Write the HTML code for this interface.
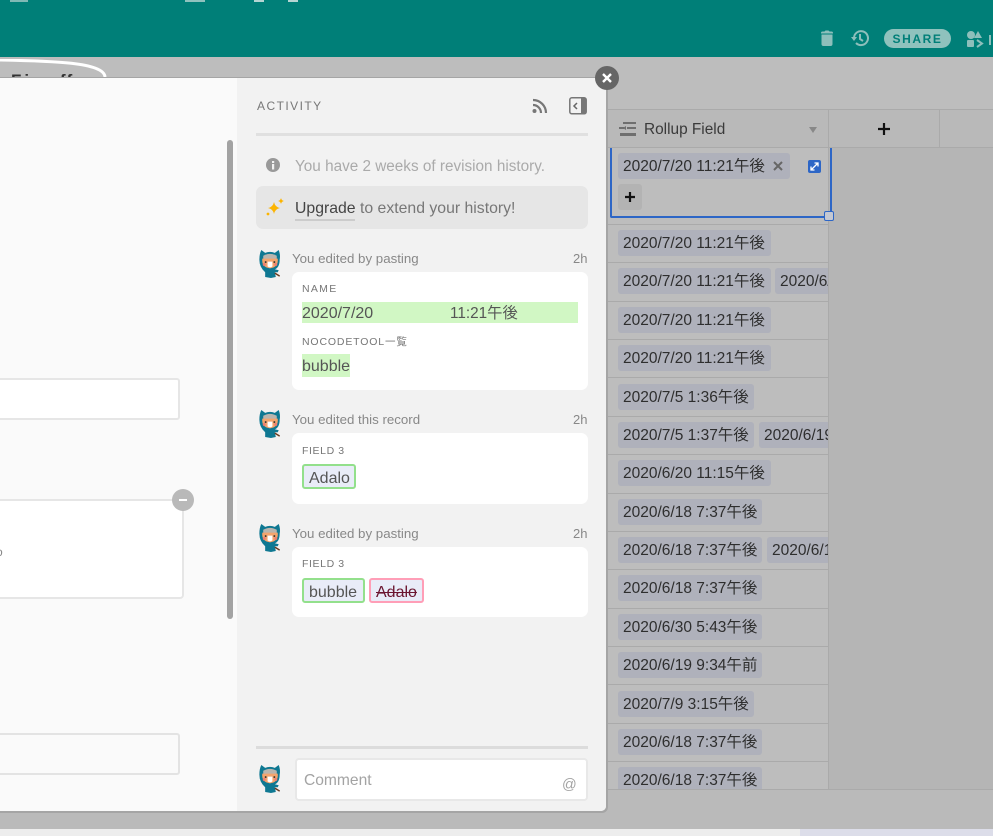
<!DOCTYPE html>
<html><head><meta charset="utf-8">
<style>
html,body{margin:0;padding:0;width:993px;height:836px;overflow:hidden;background:#bdbdbd}
body{position:relative;font-family:"Liberation Sans","Noto Sans CJK JP",sans-serif;color:#333}
.a{position:absolute;white-space:nowrap;box-sizing:border-box}
.chip{position:absolute;height:26px;line-height:28px;background:#afb1bb;border-radius:3px;padding:0 5px;font-size:15.500px;color:#2e2e2e;white-space:nowrap;overflow:hidden}
.sep{position:absolute;left:608px;width:220px;height:1px;background:#aaa}
.lab{position:absolute;font-size:10.500px;letter-spacing:1.100px;color:#777;white-space:nowrap}
.meta{position:absolute;font-size:13.300px;color:#888;white-space:nowrap}
.time{position:absolute;font-size:13px;color:#888;left:573px}
.card{position:absolute;left:292px;width:296px;background:#fff;border-radius:7px}
.tag{position:absolute;height:26px;line-height:25px;background:#e9ecf8;border:2px solid #93e08c;border-radius:3px;box-sizing:border-box;padding:0 5px;font-size:16px;color:#555;white-space:nowrap}
</style></head><body>
<div class="a" style="left:0;top:0;width:993px;height:57px;background:#007f78"></div>
<div class="a" style="left:10px;top:0;width:18px;height:2px;background:#7fb9b5"></div>
<div class="a" style="left:185px;top:0;width:20px;height:2px;background:#8fc2be"></div>
<div class="a" style="left:254px;top:0;width:10px;height:2px;background:#b5d5d3"></div>
<div class="a" style="left:288px;top:0;width:10px;height:2px;background:#b5d5d3"></div>

<svg class="a" style="left:818px;top:28px" width="175" height="22" viewBox="0 0 175 22">
<path d="M3 5q0-1.500 1.500-1.500H6.500L7.500 2.500h3l1 1H13.500Q15 3.500 15 5v.5H3zM3.500 6.500h11V16q0 2-2 2h-7q-2 0-2-2z" fill="#8dbfbb"/>
<g fill="none" stroke="#8dbfbb" stroke-width="2"><path d="M36 10a7 7 0 1 1 2 5"/><path d="M42 6v5l3 2"/></g>
<path d="M33 9h6l-3 4z" fill="#8dbfbb"/>
<circle cx="153" cy="7" r="4" fill="#8dbfbb"/><path d="M160 3l4 7h-8z" fill="#8dbfbb"/><rect x="149" y="12" width="7" height="7" rx="1" fill="#8dbfbb"/>
<path d="M159 12l5 3.500-5 3.500" fill="none" stroke="#8dbfbb" stroke-width="2"/>
<rect x="171" y="7" width="2" height="10" fill="#8dbfbb"/>
</svg>
<div class="a" style="left:884px;top:29px;width:67px;height:19px;border-radius:10px;background:#8fc2bd;color:#007f78;font-size:12px;font-weight:bold;letter-spacing:1.600px;line-height:20px;text-align:center">SHARE</div>

<div class="a" style="left:0;top:57px;width:993px;height:779px;background:#bdbdbd"></div>
<div class="a" style="left:828px;top:148px;width:165px;height:642px;background:#b5b5b5"></div>
<div class="a" style="left:608px;top:109px;width:385px;height:1px;background:#aaa"></div>
<div class="a" style="left:608px;top:110px;width:385px;height:38px;background:#b9b9b9"></div>
<div class="a" style="left:608px;top:147px;width:385px;height:1px;background:#aaa"></div>
<div class="a" style="left:828px;top:110px;width:1px;height:680px;background:#aaa"></div>
<div class="a" style="left:939px;top:110px;width:1px;height:38px;background:#aaa"></div>
<div class="a" style="left:0;top:789px;width:993px;height:1px;background:#aaa"></div>
<div class="a" style="left:0;top:790px;width:993px;height:39px;background:#bababa"></div>
<div class="a" style="left:0;top:829px;width:800px;height:7px;background:#ededed"></div>
<div class="a" style="left:800px;top:829px;width:193px;height:7px;background:#dcdde9"></div>

<svg class="a" style="left:619px;top:121px" width="18" height="16" viewBox="0 0 18 16"><g fill="#6f6f6f"><rect x="4" y="1" width="13" height="2"/><rect x="0" y="6" width="5" height="2"/><rect x="8" y="6" width="9" height="2"/><rect x="1" y="12" width="16" height="3"/></g><path d="M4 7l3-2v4z" fill="#6f6f6f"/></svg>
<div class="a" style="left:644px;top:121px;font-size:15.400px;color:#3a3a3a">Rollup Field</div>
<div class="a" style="left:809px;top:127px;width:0;height:0;border-left:4px solid transparent;border-right:4px solid transparent;border-top:6px solid #888"></div>
<svg class="a" style="left:877px;top:122px" width="14" height="14"><path d="M7 1v12M1 7h12" stroke="#111" stroke-width="2.200"/></svg>

<!-- rows -->
<div class="sep" style="top:224px"></div><div class="sep" style="top:262px"></div><div class="sep" style="top:301px"></div><div class="sep" style="top:339px"></div><div class="sep" style="top:377px"></div><div class="sep" style="top:416px"></div><div class="sep" style="top:454px"></div><div class="sep" style="top:493px"></div><div class="sep" style="top:531px"></div><div class="sep" style="top:569px"></div><div class="sep" style="top:608px"></div><div class="sep" style="top:646px"></div><div class="sep" style="top:684px"></div><div class="sep" style="top:723px"></div><div class="sep" style="top:761px"></div>

<div class="chip" style="left:618px;top:230px;width:153px;box-sizing:border-box">2020/7/20 11:21午後</div>
<div class="chip" style="left:618px;top:268px;width:153px;box-sizing:border-box">2020/7/20 11:21午後</div>
<div class="chip" style="left:775px;top:268px;width:53px;box-sizing:border-box;border-radius:3px 0 0 3px">2020/6/20</div>
<div class="chip" style="left:618px;top:307px;width:153px;box-sizing:border-box">2020/7/20 11:21午後</div>
<div class="chip" style="left:618px;top:345px;width:153px;box-sizing:border-box">2020/7/20 11:21午後</div>
<div class="chip" style="left:618px;top:384px;width:136px;box-sizing:border-box">2020/7/5 1:36午後</div>
<div class="chip" style="left:618px;top:422px;width:136px;box-sizing:border-box">2020/7/5 1:37午後</div>
<div class="chip" style="left:759px;top:422px;width:69px;box-sizing:border-box;border-radius:3px 0 0 3px">2020/6/19</div>
<div class="chip" style="left:618px;top:460px;width:153px;box-sizing:border-box">2020/6/20 11:15午後</div>
<div class="chip" style="left:618px;top:499px;width:144px;box-sizing:border-box">2020/6/18 7:37午後</div>
<div class="chip" style="left:618px;top:537px;width:144px;box-sizing:border-box">2020/6/18 7:37午後</div>
<div class="chip" style="left:767px;top:537px;width:61px;box-sizing:border-box;border-radius:3px 0 0 3px">2020/6/18</div>
<div class="chip" style="left:618px;top:575px;width:144px;box-sizing:border-box">2020/6/18 7:37午後</div>
<div class="chip" style="left:618px;top:614px;width:144px;box-sizing:border-box">2020/6/30 5:43午後</div>
<div class="chip" style="left:618px;top:652px;width:144px;box-sizing:border-box">2020/6/19 9:34午前</div>
<div class="chip" style="left:618px;top:691px;width:136px;box-sizing:border-box">2020/7/9 3:15午後</div>
<div class="chip" style="left:618px;top:729px;width:144px;box-sizing:border-box">2020/6/18 7:37午後</div>
<div class="chip" style="left:618px;top:767px;width:144px;box-sizing:border-box;height:22px;border-radius:3px 3px 0 0">2020/6/18 7:37午後</div>

<!-- selected cell -->
<div class="a" style="left:610px;top:148px;width:222px;height:70px;border:2px solid #2d66c6;border-top:none;border-radius:0 0 2px 2px"></div>
<div class="chip" style="left:618px;top:153px;width:172px;box-sizing:border-box">2020/7/20 11:21午後</div>
<svg class="a" style="left:772px;top:160px" width="12" height="12"><path d="M2 2l8 8M10 2l-8 8" stroke="#666" stroke-width="2"/></svg>
<div class="a" style="left:618px;top:184px;width:24px;height:26px;background:#b3b3b3;border-radius:3px"></div>
<svg class="a" style="left:624px;top:191px" width="12" height="12"><path d="M6 1v10M1 6h10" stroke="#111" stroke-width="2.200"/></svg>
<svg class="a" style="left:808px;top:160px" width="13" height="13"><rect width="13" height="13" rx="2" fill="#2d66c6"/><path d="M3.500 9.500l6-6M6.500 3h3.500v3.500M3 6.500v3.500h3.500" stroke="#fff" stroke-width="1.300" fill="none"/></svg>
<div class="a" style="left:824px;top:211px;width:10px;height:10px;background:#c4c8d2;border:1px solid #2d66c6;border-radius:2px"></div>

<!-- modal backdrop tab -->
<svg class="a" style="left:0;top:59px" width="110" height="20"><path d="M0 1 C50 2 104 3 105 18" fill="none" stroke="#fff" stroke-width="3"/></svg>
<div class="a" style="left:11px;top:71px;font-size:17px;font-weight:bold;letter-spacing:3px;color:#333;height:7px;overflow:hidden;line-height:20px">Fi</div>
<div class="a" style="left:60px;top:71px;font-size:17px;font-weight:bold;letter-spacing:1px;color:#333;height:7px;overflow:hidden;line-height:20px">ff</div>

<!-- modal -->
<div class="a" style="left:0;top:77px;width:608px;height:736px;background:#a5a5a5;border-radius:0 6px 6px 0"></div>
<div class="a" style="left:0;top:78px;width:606px;height:733px;background:#fafafa;border-radius:0 5px 5px 0;overflow:hidden">
 <div class="a" style="left:237px;top:0;width:369px;height:733px;background:#f2f2f2"></div>
</div>
<div class="a" style="left:227px;top:140px;width:6px;height:479px;background:#a3a3a3;border-radius:3px"></div>

<div class="a" style="left:-5px;top:378px;width:185px;height:42px;background:#fff;border:2px solid #e6e6e6;border-radius:3px"></div>
<div class="a" style="left:-5px;top:499px;width:189px;height:100px;background:#fff;border:2px solid #e6e6e6;border-radius:4px"></div>
<div class="a" style="left:-4px;top:545px;font-size:12px;color:#888">o</div>
<div class="a" style="left:172px;top:489px;width:22px;height:22px;border-radius:50%;background:#b9b9b9"></div>
<div class="a" style="left:179px;top:499px;width:8px;height:2px;background:#fff"></div>
<div class="a" style="left:-5px;top:733px;width:185px;height:42px;background:#fafafa;border:2px solid #e3e3e3;border-radius:3px"></div>

<!-- close -->
<div class="a" style="left:595px;top:66px;width:24px;height:24px;border-radius:50%;background:#666"></div>
<svg class="a" style="left:601px;top:72px" width="12" height="12"><path d="M2 2l8 8M10 2l-8 8" stroke="#fff" stroke-width="2.400"/></svg>

<!-- activity -->
<div class="a" style="left:257px;top:99px;font-size:12px;letter-spacing:1.450px;color:#777">ACTIVITY</div>
<svg class="a" style="left:532px;top:98px" width="16" height="16" viewBox="0 0 16 16"><circle cx="2.500" cy="13" r="2" fill="#777"/><path d="M1 7a8 8 0 0 1 8 8M1 2a13 13 0 0 1 13 13" fill="none" stroke="#777" stroke-width="2.200"/></svg>
<svg class="a" style="left:569px;top:97px" width="18" height="18" viewBox="0 0 18 18"><rect x=".8" y=".8" width="16.400" height="16" rx="2" fill="#f2f2f2" stroke="#777" stroke-width="1.500"/><path d="M12 1h3q2 0 2 2v12q0 2-2 2h-3z" fill="#777"/><path d="M8 6l-3 3 3 3" fill="none" stroke="#666" stroke-width="1.500"/></svg>
<div class="a" style="left:256px;top:133px;width:332px;height:3px;background:#e0e0e0"></div>

<svg class="a" style="left:266px;top:158px" width="14" height="14" viewBox="0 0 14 14"><circle cx="7" cy="7" r="7" fill="#999"/><rect x="6" y="6" width="2.200" height="5.500" fill="#f2f2f2"/><rect x="6" y="3" width="2.200" height="2" fill="#f2f2f2"/></svg>
<div class="a" style="left:295px;top:158px;font-size:15.300px;color:#aaa">You have 2 weeks of revision history.</div>
<div class="a" style="left:256px;top:186px;width:332px;height:43px;background:#e6e6e6;border-radius:7px"></div>
<svg class="a" style="left:266px;top:198px" width="19" height="19" viewBox="0 0 19 19"><path d="M8 3q1 5 6 6q-5 1-6 6q-1-5-6-6q5-1 6-6z" fill="#fcb400" transform="translate(0 1)"/><path d="M15 0q.5 2.500 3 3q-2.500.5-3 3q-.5-2.500-3-3q2.500-.5 3-3z" fill="#fcb400"/><circle cx="2" cy="16" r="1.400" fill="#fcb400"/></svg>
<div class="a" style="left:295px;top:200px;font-size:15.800px;color:#777"><span style="color:#444">Upgrade</span> to extend your history!</div>
<div class="a" style="left:295px;top:219px;width:60px;height:2px;background:#ccc"></div>

<!-- avatars -->
<svg width="0" height="0" style="position:absolute"><defs><symbol id="av" viewBox="0 0 24 30">
<path d="M3 1l4 3q5-2 10 0l4-3q2 5 1 10q0 8-5 10l4 1-1 2-3 0 1 5-5 1-6-1 0-5Q1 19 1 11 1 5 3 1z" fill="#0f7892"/>
<path d="M5 7q7-4 14 0v4H5z" fill="#b9b5ae"/>
<path d="M4 10h16q1 9-8 10Q3 19 4 10z" fill="#f4a46c"/>
<path d="M9.500 13h5v5q-2.500 2-5 0z" fill="#fff"/><circle cx="7.500" cy="13.500" r="1" fill="#333"/><circle cx="16.500" cy="13.500" r="1" fill="#333"/><circle cx="6" cy="16" r="1.500" fill="#ee7d73"/><circle cx="18" cy="16" r="1.500" fill="#ee7d73"/>
<path d="M17 25l5 3" stroke="#6a3a20" stroke-width="1.500"/>
</symbol></defs></svg>
<svg class="a" style="left:258px;top:249px" width="24" height="29"><use href="#av"/></svg>
<svg class="a" style="left:258px;top:409px" width="24" height="29"><use href="#av"/></svg>
<svg class="a" style="left:258px;top:523px" width="24" height="29"><use href="#av"/></svg>
<svg class="a" style="left:258px;top:764px" width="24" height="29"><use href="#av"/></svg>

<div class="meta" style="left:292px;top:251px">You edited by pasting</div><div class="time" style="top:251px">2h</div>
<div class="card" style="top:272px;height:118px"></div>
<div class="lab" style="left:302px;top:283px;letter-spacing:1.300px">NAME</div>
<div class="a" style="left:302px;top:302px;width:276px;height:21px;background:#d1f7c4;font-size:16px;line-height:23px;color:#555">2020/7/20<span style="position:absolute;left:148px;font-size:15.300px">11:21午後</span></div>
<div class="lab" style="left:302px;top:334px;letter-spacing:.85px">NOCODETOOL一覧</div>
<div class="a" style="left:302px;top:354px;width:48px;height:23px;background:#d1f7c4;font-size:16px;line-height:25px;color:#555">bubble</div>

<div class="meta" style="left:292px;top:412px">You edited this record</div><div class="time" style="top:412px">2h</div>
<div class="card" style="top:433px;height:71px"></div>
<div class="lab" style="left:302px;top:445px;letter-spacing:.6px">FIELD 3</div>
<div class="tag" style="left:302px;top:464px;width:54px;height:25px">Adalo</div>

<div class="meta" style="left:292px;top:526px">You edited by pasting</div><div class="time" style="top:526px">2h</div>
<div class="card" style="top:547px;height:70px"></div>
<div class="lab" style="left:302px;top:558px;letter-spacing:.6px">FIELD 3</div>
<div class="tag" style="left:302px;top:578px;width:63px;height:25px">bubble</div>
<div class="tag" style="left:369px;top:578px;width:55px;height:25px;border-color:#ff9eb7;color:#6b1530;text-decoration:line-through">Adalo</div>

<div class="a" style="left:256px;top:746px;width:332px;height:3px;background:#dcdcdc"></div>
<div class="a" style="left:295px;top:758px;width:293px;height:43px;background:#fff;border:2px solid #e8e8e8;border-radius:4px"></div>
<div class="a" style="left:304px;top:772px;font-size:15.600px;color:#a3a3a3">Comment</div>
<div class="a" style="left:562px;top:777px;font-size:14.500px;color:#a3a3a3">@</div>
</body></html>
